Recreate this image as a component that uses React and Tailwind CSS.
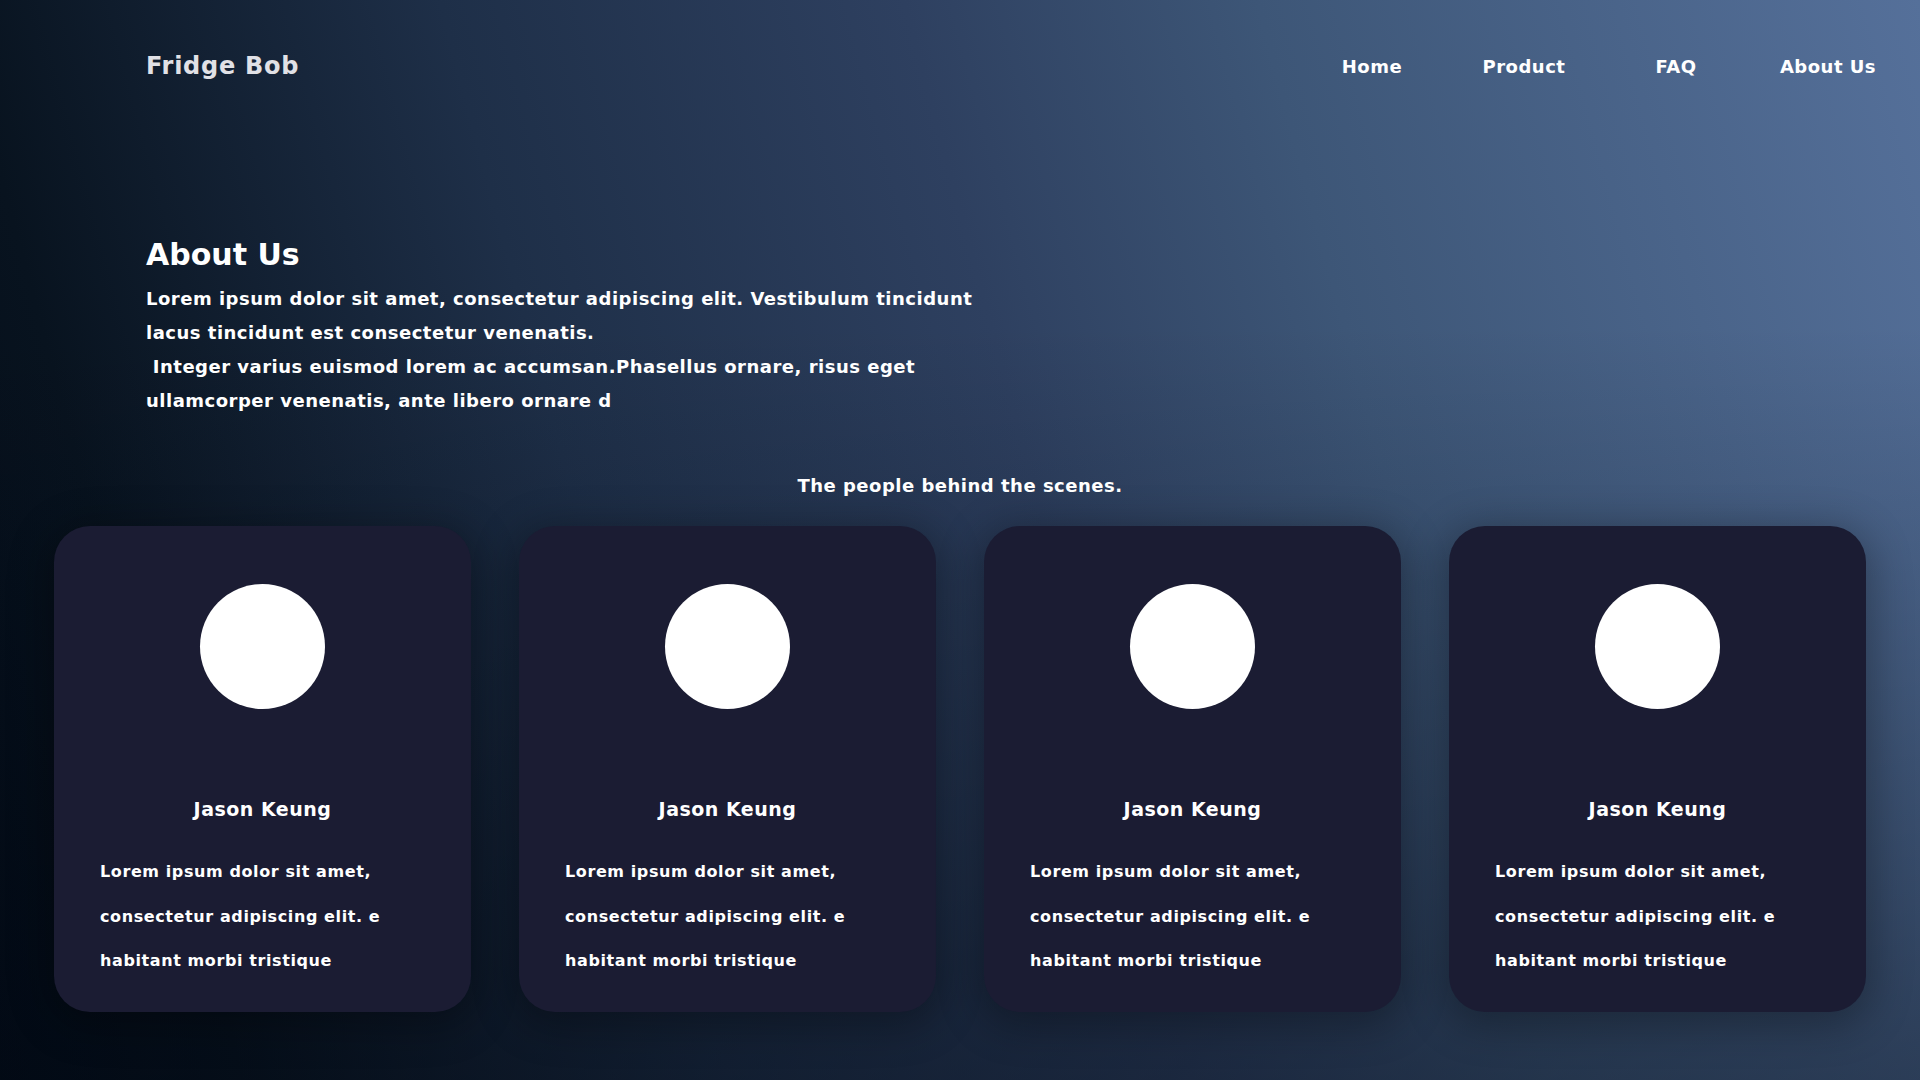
import React from 'react'

const font = { fontFamily: '"DejaVu Sans", "Open Sans", sans-serif' }

const navLinks = ['Home', 'Product', 'FAQ', 'About Us']

function MemberCard({ name }) {
  return (
    <div className="h-[486px] rounded-[36px] bg-[#1b1c33] shadow-[0_8px_40px_6px_rgba(0,0,0,0.3)] flex flex-col items-center pt-[58px]">
      <div className="w-[125px] h-[125px] rounded-full bg-white" />
      <h3 className="mt-[86px] text-[19px] leading-[28px] font-bold tracking-[0.5px] text-white">{name}</h3>
      <p className="mt-[27px] self-stretch px-[46px] text-[16px] leading-[44.5px] font-bold tracking-[0.6px] text-white whitespace-nowrap">
        Lorem ipsum dolor sit amet,
        <br />
        consectetur adipiscing elit. e
        <br />
        habitant morbi tristique
      </p>
    </div>
  )
}

export default function App() {
  return (
    <div
      style={font}
      className="w-full h-[1080px] overflow-hidden text-white bg-[linear-gradient(180deg,transparent_30%,rgba(0,6,16,0.42)_100%),linear-gradient(75deg,#030c18_0%,#08131f_11%,#1e2f48_33%,#2e4060_54%,#3d5677_70%,#55709a_100%)]"
    >
      <header className="h-[132px] flex items-center justify-between pl-[146px] pr-[16px]">
        <span className="text-[24px] font-bold tracking-[0.03em] text-[#e1e1e6]">Fridge Bob</span>
        <nav className="flex">
          {navLinks.map((l) => (
            <a key={l} href="#" className="w-[152px] text-center text-[18px] font-bold tracking-[0.5px] text-white">
              {l}
            </a>
          ))}
        </nav>
      </header>

      <section className="pl-[146px] mt-[103px]">
        <h1 className="text-[30px] leading-[40px] font-bold">About Us</h1>
        <p className="mt-[7px] text-[18px] leading-[34px] font-bold tracking-[0.5px] whitespace-pre">
          Lorem ipsum dolor sit amet, consectetur adipiscing elit. Vestibulum tincidunt
          <br />
          lacus tincidunt est consectetur venenatis.
          <br />
          {' Integer varius euismod lorem ac accumsan.Phasellus ornare, risus eget'}
          <br />
          ullamcorper venenatis, ante libero ornare d
        </p>
      </section>

      <p className="mt-[51px] text-center text-[18px] leading-[34px] font-bold tracking-[0.5px]">
        The people behind the scenes.
      </p>

      <div className="mt-[23px] px-[54px] grid grid-cols-4 gap-[48px]">
        {[0, 1, 2, 3].map((i) => (
          <MemberCard key={i} name="Jason Keung" />
        ))}
      </div>
    </div>
  )
}
